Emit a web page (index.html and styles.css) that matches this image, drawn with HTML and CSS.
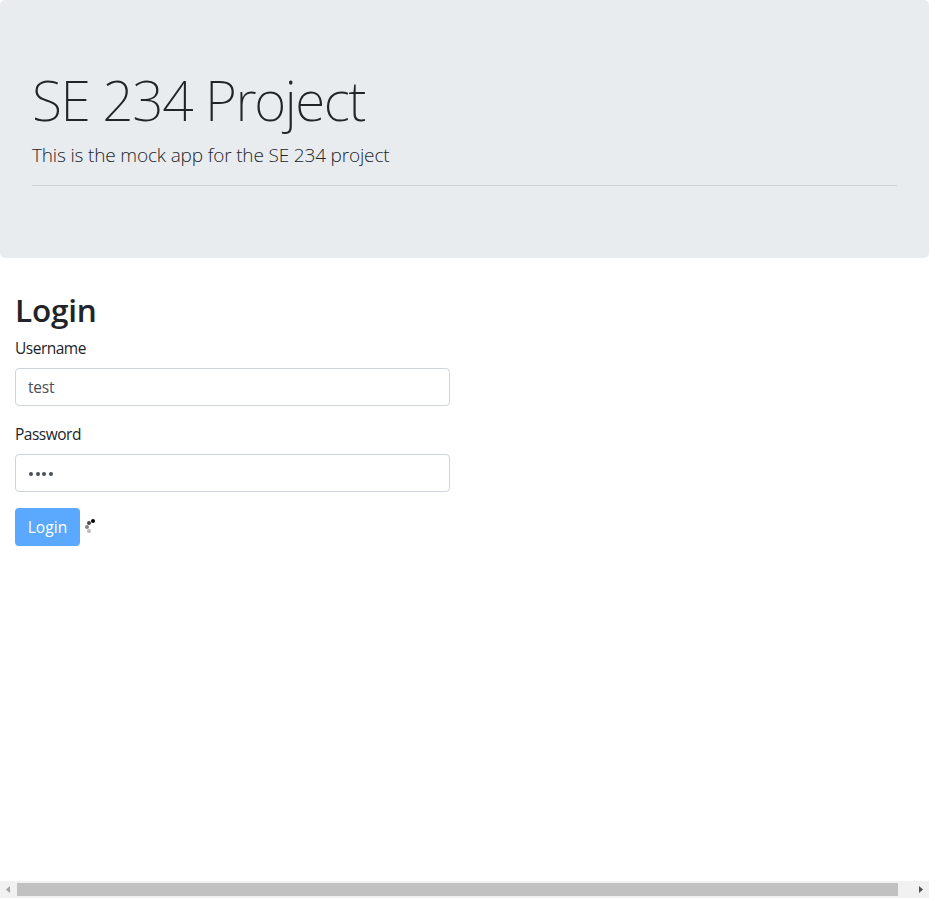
FILE: index.html
```html
<!DOCTYPE html>
<html lang="en">
<head>
<meta charset="utf-8">
<title>SE 234 Project</title>
<link rel="stylesheet" href="styles.css">
</head>
<body>
<header class="jumbotron">
  <h1 class="display">SE 234 Project</h1>
  <p class="lead">This is the mock app for the SE 234 project</p>
  <hr>
</header>
<main>
  <h2>Login</h2>
  <form>
    <label for="username">Username</label>
    <input id="username" type="text" value="test">
    <label for="password">Password</label>
    <div class="control" id="password"><i></i><i></i><i></i><i></i></div>
    <div class="actions">
      <button type="button">Login</button>
      <svg class="spinner" width="16" height="16" viewBox="0 0 16 16" aria-hidden="true">
        <circle cx="9" cy="3" r="2" fill="#050505"/>
        <circle cx="5" cy="5" r="2" fill="#484848"/>
        <circle cx="3" cy="9" r="2" fill="#858585"/>
        <circle cx="5" cy="13" r="2" fill="#bbb"/>
      </svg>
    </div>
  </form>
</main>
<div class="scrollbar">
  <svg width="17" height="17" viewBox="0 0 17 17"><path d="M10 5v7L6 8.5z" fill="#a3a3a3"/></svg>
  <div class="thumb"></div>
  <svg class="end" width="17" height="17" viewBox="0 0 17 17"><path d="M7 5v7l4-3.500z" fill="#505050"/></svg>
</div>
</body>
</html>
```
FILE: styles.css
```css
* { box-sizing: border-box; }
body {
  margin: 0;
  height: 898px;
  overflow: hidden;
  display: flex;
  flex-direction: column;
  background: #fff;
  color: #212529;
  font: 400 15.5px/24px "Open Sans", sans-serif;
}
.jumbotron {
  height: 258px;
  padding: 66px 32px 64px;
  background: #e9ecef;
  border-radius: 5px;
}
.display {
  margin: 0 0 7px;
  font-family: "Noto Sans", sans-serif;
  font-size: 55px;
  font-weight: 250;
  line-height: 67px;
  letter-spacing: -1.4px;
}
.lead {
  margin: 0;
  font-size: 19px;
  font-weight: 300;
  line-height: 30px;
  letter-spacing: -0.16px;
}
hr {
  margin: 15px 0 8px;
  border: 0;
  border-top: 1px solid #d0d4d7;
}
main {
  flex: 1;
  width: 465px;
  padding: 33px 15px 0;
}
h2 {
  margin: 0 0 7px;
  font-size: 31.500px;
  font-weight: 600;
  line-height: 38px;
  letter-spacing: -0.2px;
}
label { display: block; margin-bottom: 8px; letter-spacing: -0.5px; }
input, .control {
  display: flex;
  align-items: center;
  width: 100%;
  height: 38px;
  margin-bottom: 16px;
  padding: 6px 12px;
  border: 1px solid #ced4da;
  border-radius: 4px;
  background: #fff;
  color: #495057;
  font: inherit;
  letter-spacing: -0.2px;
}
.control { gap: 2.500px; padding: 8px 12px 6px 13px; }
.control i { width: 4px; height: 4px; border-radius: 50%; background: #495057; }
.actions { display: flex; gap: 4px; }
button {
  width: 65px;
  height: 38px;
  padding: 0;
  border: 0;
  border-radius: 4px;
  background: #5aa9ff;
  color: #fff;
  font: inherit;
  letter-spacing: 0.1px;
}
.spinner { margin-top: 10px; }
.scrollbar {
  display: flex;
  height: 17px;
  background: #f1f1f1;
}
.thumb { width: 881px; height: 13px; margin-top: 2px; background: #c1c1c1; }
.end { margin-left: auto; }
```
